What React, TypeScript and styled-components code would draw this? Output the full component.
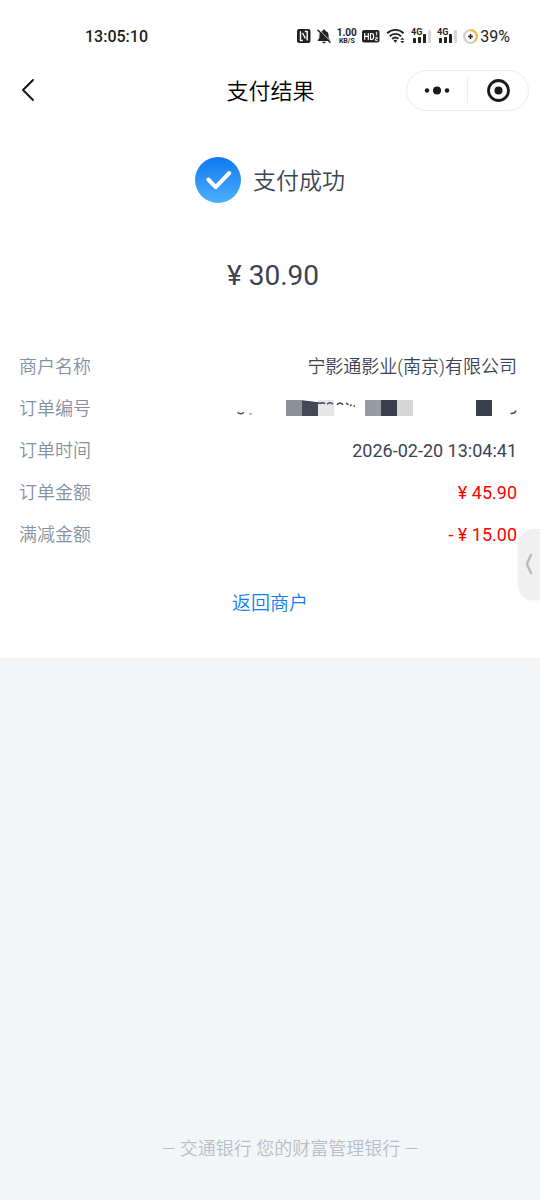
import React from 'react';
import styled, { createGlobalStyle } from 'styled-components';

const GlobalStyle = createGlobalStyle`
  *, *::before, *::after { box-sizing: border-box; }
  body {
    margin: 0;
    background: #f4f5f7;
    font-family: Roboto, "Noto Sans CJK SC", sans-serif;
    color: #3a4352;
  }
  button { font: inherit; color: inherit; border: 0; padding: 0; background: none; cursor: pointer; }
  svg { display: block; flex: none; }
`;

const Page = styled.div`
  min-height: 100vh;
  display: flex;
  flex-direction: column;
`;

const Sheet = styled.main`
  background: #fff;
  padding-bottom: 40px;
`;

const StatusBar = styled.div`
  display: flex;
  align-items: center;
  justify-content: space-between;
  height: 63px;
  padding: 9px 30px 0 85px;
  color: #1c1c1c;
`;

const Clock = styled.time`
  padding-top: 2px;
  font-size: 16px;
  line-height: 20px;
  font-weight: 500;
`;

const StatusIcons = styled.div`
  display: flex;
  align-items: center;
  gap: 6px;
`;

const NetSpeed = styled.div`
  display: flex;
  flex-direction: column;
  align-items: center;
  width: 19px;
  font-weight: 700;
  font-size: 10px;
  line-height: 10px;
  white-space: nowrap;
`;

const SpeedUnit = styled.span`
  font-size: 7px;
  line-height: 7px;
`;

const Battery = styled.div`
  display: flex;
  align-items: center;
  gap: 2px;
`;

const BatteryLevel = styled.span`
  padding-top: 2px;
  font-size: 16px;
  line-height: 20px;
`;

const NavBar = styled.header`
  display: grid;
  grid-template-columns: 1fr auto 1fr;
  align-items: center;
  height: 54px;
  padding: 0 11px 0 12px;
`;

const BackButton = styled.button`
  justify-self: start;
  display: grid;
  place-items: center;
  width: 32px;
  height: 40px;
`;

const Title = styled.h1`
  margin: 0;
  padding-top: 4px;
  font-size: 22px;
  line-height: 32px;
  font-weight: 350;
  color: #000;
`;

const Capsule = styled.div`
  justify-self: end;
  display: flex;
  align-items: center;
  width: 123px;
  height: 41px;
  border: 1px solid #ececec;
  border-radius: 21px;
`;

const CapsuleButton = styled.button`
  flex: 1;
  height: 25px;
  display: grid;
  place-items: center;
  & + & { border-left: 1px solid #ececec; }
`;

const Result = styled.section`
  display: flex;
  align-items: center;
  justify-content: center;
  gap: 12px;
  margin-top: 40px;
`;

const ResultText = styled.h2`
  margin: 0;
  padding-top: 4px;
  font-size: 23px;
  line-height: 32px;
  font-weight: 350;
`;

const Amount = styled.p`
  margin: 53px 0 0;
  padding-left: 6px;
  text-align: center;
  font-size: 28px;
  line-height: 40px;
`;

const Details = styled.dl`
  margin: 50px 0 0;
  padding: 0 23px 0 19px;
`;

const DetailRow = styled.div`
  display: flex;
  align-items: center;
  justify-content: space-between;
  height: 42px;
  font-size: 18px;
  line-height: 26px;
`;

const Label = styled.dt`
  color: #8490a2;
  font-weight: 350;
`;

const Value = styled.dd<{ $red?: boolean; $light?: boolean }>`
  margin: 0;
  color: ${(p) => (p.$red ? '#ff0000' : '#3a4352')};
  font-weight: ${(p) => (p.$light ? 350 : 400)};
`;

const Actions = styled.div`
  display: flex;
  justify-content: center;
  margin-top: 34px;
`;

const ReturnLink = styled.a`
  font-size: 19px;
  line-height: 28px;
  font-weight: 350;
  color: #147df0;
  text-decoration: none;
`;

const Footer = styled.footer`
  margin-top: auto;
  padding: 0 0 38px 40px;
  text-align: center;
  font-size: 18px;
  line-height: 26px;
  font-weight: 350;
  color: #b7bec9;
`;

const SideTab = styled.button`
  position: absolute;
  top: 529px;
  right: 0;
  width: 22px;
  height: 70px;
  display: grid;
  place-items: center;
  background: #f0f0f0;
  border-radius: 16px 0 0 16px;
  box-shadow: 0 1px 2px rgba(0, 0, 0, 0.1);
`;

const NfcIcon = () => (
  <svg width="14" height="14" viewBox="0 0 14 14" aria-hidden="true">
    <rect width="13.500" height="14" rx="2" fill="#222" />
    <path d="M3.500 2.300v9.200h2.300" fill="none" stroke="#fff" strokeWidth="1.400" />
    <path d="M10.200 11.500V2.500H7.800" fill="none" stroke="#fff" strokeWidth="1.400" />
    <path d="M5.500 4l3 5.500" fill="none" stroke="#fff" strokeWidth="1.400" />
  </svg>
);

const MuteIcon = () => (
  <svg width="14" height="15" viewBox="0 0 14 15" aria-hidden="true">
    <path d="M7 .6c.8 0 1.200.5 1.200 1.200 2 .6 3.400 2.200 3.400 4.400v2.600l1.600 2.400v.9H.8v-.9l1.600-2.400V6.200c0-2.200 1.400-3.800 3.400-4.400C5.800 1.100 6.200.6 7 .6z" fill="#222" />
    <path d="M5.300 12.700h3.400c0 1-.8 1.600-1.700 1.600s-1.700-.6-1.700-1.600z" fill="#222" />
    <path d="M2.200.9l12 12" stroke="#fff" strokeWidth=".9" />
    <path d="M1 1.300l12 12" stroke="#222" strokeWidth="1.500" strokeLinecap="round" />
  </svg>
);

const HdIcon = () => (
  <svg width="18" height="13" viewBox="0 0 18 13" aria-hidden="true">
    <rect width="17.500" height="12.500" rx="2" fill="#222" />
    <path d="M2.700 3v6.800M6.300 3v6.800M2.700 6.300h3.600M8.500 3.500v5.800h1.200c1.500 0 2-.9 2-2.900s-.5-2.900-2-2.900z" fill="none" stroke="#fff" strokeWidth="1.200" />
    <path d="M13.800 2.500l.9-.5v3.500M13.400 7.400h2v1.500h-1.900v1.700h2.200" fill="none" stroke="#fff" strokeWidth=".9" />
  </svg>
);

const WifiIcon = () => (
  <svg width="19" height="16" viewBox="0 0 19 16" aria-hidden="true">
    <g fill="none" stroke="#222" strokeWidth="1.900">
      <path d="M1.200 5.200c4.600-4.400 11.800-4.400 16.400 0" />
      <path d="M3.700 8.200c3.200-3.100 8.200-3.100 11.400 0" />
      <path d="M6.200 11c1.900-1.700 4.500-1.700 6.200-.2" />
    </g>
    <path d="M7.400 12.600c1.100-1 2.900-1 4 0l-2 2.200z" fill="#222" />
    <path d="M14.300 11.700l2-2.200 2 2.200zM14.300 13l2 2.200 2-2.200z" fill="#222" />
  </svg>
);

const SignalIcon = () => (
  <svg width="20" height="15" viewBox="0 0 20 15" overflow="visible" aria-hidden="true">
    <text x="0" y="6" fontSize="9" fontWeight="700" fill="#222">4G</text>
    <rect x="2" y="9" width="3" height="5" rx=".6" fill="#222" />
    <rect x="7" y="8" width="3" height="6" rx=".6" fill="#222" />
    <rect x="12" y="5" width="3" height="9" rx=".6" fill="#222" />
    <rect x="17" y="1" width="3" height="13" rx=".6" fill="#d6d6d6" />
  </svg>
);

const BatteryIcon = () => (
  <svg width="15" height="15" viewBox="0 0 15 15" aria-hidden="true">
    <circle cx="7.500" cy="7.500" r="6.300" fill="none" stroke="#cfcfcf" strokeWidth="2.200" />
    <path d="M7.500 1.200a6.300 6.300 0 0 1 4.300 10.900" fill="none" stroke="#fbbf3c" strokeWidth="2.200" />
    <path d="M7.500 5v5M5 7.500h5" stroke="#222" strokeWidth="1.500" />
  </svg>
);

const SuccessIcon = () => (
  <svg width="46" height="46" viewBox="0 0 46 46" aria-hidden="true">
    <defs>
      <linearGradient id="success" x1="0" y1="0" x2="0" y2="1">
        <stop offset="0" stopColor="#0f78ee" />
        <stop offset="1" stopColor="#4dafff" />
      </linearGradient>
    </defs>
    <circle cx="23" cy="23" r="23" fill="url(#success)" />
    <path d="M13.300 22.500l7.400 7.700L34.300 16" fill="none" stroke="#fff" strokeWidth="4" strokeLinecap="round" strokeLinejoin="round" />
  </svg>
);

const mosaic = [
  { x: 50, fill: '#8b8f9a' },
  { x: 66, fill: '#444959' },
  { x: 82, fill: '#e7e7ea' },
  { x: 129, fill: '#979ba6' },
  { x: 145, fill: '#38404e' },
  { x: 161, fill: '#d6d6d6' },
  { x: 240, fill: '#38404e' },
];

const MaskedNumber = () => (
  <svg width="281" height="18" viewBox="0 0 281 18" role="img" aria-label="订单编号已隐藏">
    {mosaic.map((b) => (
      <rect key={b.x} x={b.x} width="16" height="16" fill={b.fill} />
    ))}
    <path d="M66 0h16v2.600L66 1z" fill="#fff" />
    <g fill="none" stroke="#3a4352" strokeWidth="1.400">
      <path d="M1.500 12.500q3.300 2.600 6.300 0" />
      <path d="M13 13.800h3" stroke="#a5a9b0" />
      <path d="M66 1l18 2.300" />
      <path d="M84 3.700q2-2 5 0M91 4.200q3-3 6 0M101 4.700q3-3.500 6 0M110 3.200l2.500 1.500M114 6l1.500-1.500M117.500 6h1.500" />
      <path d="M274.500 13.500q4.500.2 5.500-3" />
    </g>
  </svg>
);

const details: { label: string; value: React.ReactNode; red?: boolean; light?: boolean }[] = [
  { label: '商户名称', value: '宁影通影业(南京)有限公司', light: true },
  { label: '订单编号', value: <MaskedNumber /> },
  { label: '订单时间', value: '2026-02-20 13:04:41' },
  { label: '订单金额', value: '¥ 45.90', red: true },
  { label: '满减金额', value: '- ¥ 15.00', red: true },
];

export default function App() {
  return (
    <Page>
      <GlobalStyle />
      <Sheet>
        <StatusBar>
          <Clock>13:05:10</Clock>
          <StatusIcons>
            <NfcIcon />
            <MuteIcon />
            <NetSpeed>
              1.00
              <SpeedUnit>KB/S</SpeedUnit>
            </NetSpeed>
            <HdIcon />
            <WifiIcon />
            <SignalIcon />
            <SignalIcon />
            <Battery>
              <BatteryIcon />
              <BatteryLevel>39%</BatteryLevel>
            </Battery>
          </StatusIcons>
        </StatusBar>
        <NavBar>
          <BackButton type="button" aria-label="返回">
            <svg width="14" height="24" viewBox="0 0 14 24" aria-hidden="true">
              <path d="M12 2L2 12l10 10" fill="none" stroke="#111" strokeWidth="1.900" strokeLinecap="round" strokeLinejoin="round" />
            </svg>
          </BackButton>
          <Title>支付结果</Title>
          <Capsule>
            <CapsuleButton type="button" aria-label="更多">
              <svg width="26" height="9" viewBox="0 0 26 9" fill="#1a1a1a" aria-hidden="true">
                <circle cx="3" cy="4.500" r="2.200" />
                <circle cx="13" cy="4.500" r="4" />
                <circle cx="23" cy="4.500" r="2.200" />
              </svg>
            </CapsuleButton>
            <CapsuleButton type="button" aria-label="关闭">
              <svg width="25" height="25" viewBox="0 0 25 25" aria-hidden="true">
                <circle cx="12.500" cy="12.500" r="10" fill="none" stroke="#1a1a1a" strokeWidth="2.800" />
                <circle cx="12.500" cy="12.500" r="4" fill="#1a1a1a" />
              </svg>
            </CapsuleButton>
          </Capsule>
        </NavBar>
        <Result>
          <SuccessIcon />
          <ResultText>支付成功</ResultText>
        </Result>
        <Amount>¥ 30.90</Amount>
        <Details>
          {details.map((d) => (
            <DetailRow key={d.label}>
              <Label>{d.label}</Label>
              <Value $red={d.red} $light={d.light}>{d.value}</Value>
            </DetailRow>
          ))}
        </Details>
        <Actions>
          <ReturnLink href="#merchant">返回商户</ReturnLink>
        </Actions>
      </Sheet>
      <Footer>— 交通银行 您的财富管理银行 —</Footer>
      <SideTab type="button" aria-label="展开侧边栏">
        <svg width="8" height="22" viewBox="0 0 8 22" aria-hidden="true">
          <path d="M6 2L2.500 9.500q-.6 1.500 0 3L6 20" fill="none" stroke="#b9b9b9" strokeWidth="2.400" strokeLinecap="round" />
        </svg>
      </SideTab>
    </Page>
  );
}
